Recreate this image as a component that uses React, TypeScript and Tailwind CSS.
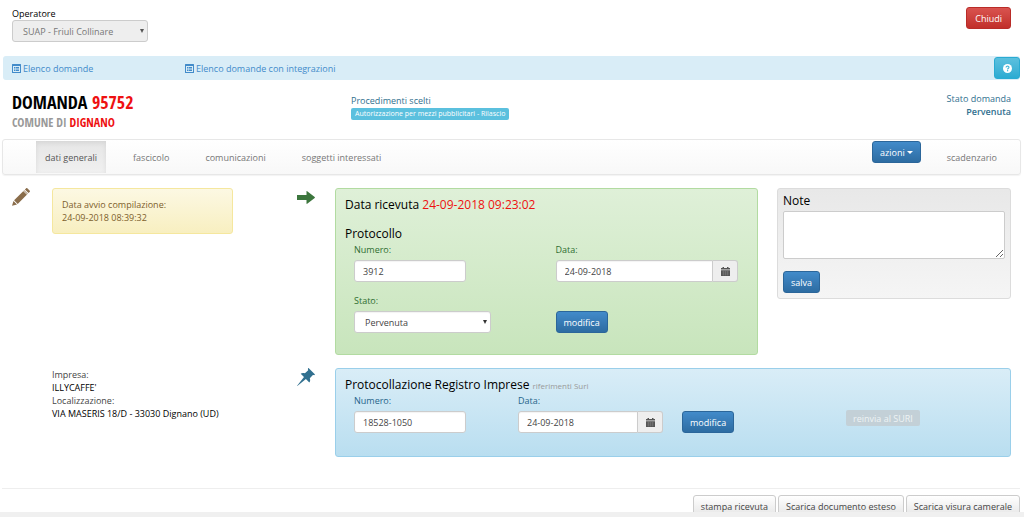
import React, { useState } from "react";

type IconProps = { className?: string };

const ListIcon = ({ className = "" }: IconProps) => (
  <svg viewBox="0 0 18 18" className={className} aria-hidden="true">
    <path
      fill="currentColor"
      fillRule="evenodd"
      d="M1 0h16a1 1 0 0 1 1 1v16a1 1 0 0 1-1 1H1a1 1 0 0 1-1-1V1a1 1 0 0 1 1-1zm1 4v12h14V4zM4 6h2v2H4zm3 0h7v2H7zM4 9h2v2H4zm3 0h7v2H7zM4 12h2v2H4zm3 0h7v2H7z"
    />
  </svg>
);

const HelpIcon = ({ className = "" }: IconProps) => (
  <svg viewBox="0 0 20 20" className={className} aria-hidden="true">
    <circle cx="10" cy="10" r="10" fill="currentColor" />
    <path d="M6.8 7.8C6.8 3.6 13.4 3.8 13.2 7.6C13.1 9.6 10.2 9.6 10.2 12.2" fill="none" stroke="#39b3d7" strokeWidth="2.4" />
    <rect x="8.9" y="13.6" width="2.6" height="2.6" fill="#39b3d7" />
  </svg>
);

const PencilIcon = ({ className = "" }: IconProps) => (
  <svg viewBox="0 0 18 18" className={className} aria-hidden="true">
    <path
      fill="currentColor"
      d="M14 .4c.5-.5 1-.5 1.500 0l2.100 2.100c.5.500.5 1 0 1.500l-1.100 1.100-3.600-3.600zM12.200 2.200l3.600 3.600-10.100 10.100-3.600-3.600zM1.500 13l3.500 3.500-5 1.300z"
    />
    <path d="M11.200 2.600l4.200 4.200" stroke="white" strokeWidth="0.900" />
  </svg>
);

const ArrowIcon = ({ className = "" }: IconProps) => (
  <svg viewBox="0 0 18 13" className={className} aria-hidden="true">
    <path fill="currentColor" d="M0 4h9.500V.4c0-.4.4-.5.700-.2L17.700 6c.3.300.3.700 0 1l-7.500 5.800c-.3.300-.7.100-.7-.3V9H0z" />
  </svg>
);

const PinIcon = ({ className = "" }: IconProps) => (
  <svg viewBox="0 0 18 18" className={className} aria-hidden="true">
    <path
      fill="currentColor"
      d="M11.800.2l6 6c.4.600-.4 1.200-1.300.9l-.6-.2-3.100 3.300c.6 1.700.5 3.200-.5 4.200L8.900 11 .3 17.900l-.2-.2L7 9.100 3.700 5.800c1.100-1 2.600-1.100 4.200-.5l3.300-3.100-.2-.7c-.3-.9.2-1.700.8-1.300z"
    />
  </svg>
);

const CalendarIcon = ({ className = "" }: IconProps) => (
  <svg viewBox="0 0 18 18" className={className} aria-hidden="true">
    <path fill="currentColor" d="M3 0h3v2h6V0h3v2h3v3H0V2h3z" />
    <path fill="currentColor" d="M0 6.500h18V18H0z" />
    <path stroke="#999" strokeWidth="0.600" fill="none" d="M2 10h14M2 14h14M5 8v9M9 8v9M13 8v9" />
  </svg>
);

const primary =
  "h-[22px] rounded-[3px] border border-[#2b669a] bg-linear-to-b from-[#428bca] to-[#2d6ca2] px-[7px] font-medium text-white";
const field =
  "h-[22px] rounded-[3px] border border-[#ccc] bg-white px-2 font-medium text-[#444] shadow-[inset_0_1px_1px_rgba(0,0,0,0.05)]";
const heading = "text-[12px] leading-[14px] font-medium text-black";
const label = "mb-1 block w-fit font-medium";

function Caret({ className = "" }: IconProps) {
  return (
    <svg viewBox="0 0 4 4" className={`pointer-events-none absolute right-1 top-[9px] size-1 ${className}`} aria-hidden="true">
      <path d="M0 0h4L2 4z" fill="currentColor" />
    </svg>
  );
}

function DateField({ id, value }: { id: string; value: string }) {
  return (
    <div className="flex pr-[19px]">
      <input id={id} defaultValue={value} className={`${field} min-w-0 flex-1 rounded-r-none`} />
      <button
        type="button"
        aria-label="Calendario"
        className="flex h-[22px] w-[25px] items-center justify-center rounded-r-[3px] border border-l-0 border-[#ccc] bg-[#eee] text-[#555]"
      >
        <CalendarIcon className="size-[9px]" />
      </button>
    </div>
  );
}

const tabs = ["dati generali", "fascicolo", "comunicazioni", "soggetti interessati"];
const downloads = ["stampa ricevuta", "Scarica documento esteso", "Scarica visura camerale"];

export default function App() {
  const [tab, setTab] = useState(tabs[0]);
  return (
    <div className="flex h-screen flex-col bg-white font-['Open_Sans',sans-serif] text-[9px] leading-[13px] text-[#444]">
      <div className="min-h-0 flex-1 overflow-hidden">
        <header className="flex h-14 items-start justify-between pl-3 pr-[13px] pt-[7px]">
          <div>
            <label htmlFor="operatore" className="block font-medium text-black">
              Operatore
            </label>
            <div className="relative w-[136px]">
              <select
                id="operatore"
                disabled
                className="h-[22px] w-full appearance-none rounded-[3px] border border-[#ccc] bg-[#eee] px-2.5 font-medium text-[#777] opacity-100"
              >
                <option>SUAP - Friuli Collinare</option>
              </select>
              <Caret className="text-[#555]" />
            </div>
          </div>
          <button
            type="button"
            className="h-[22px] rounded-[3px] border border-[#b92c28] bg-linear-to-b from-[#d9534f] to-[#c12e2a] px-2 font-medium text-white"
          >
            Chiudi
          </button>
        </header>

        <nav className="ml-[3px] mr-1 flex h-6 items-center rounded-[3px] bg-[#d9edf7] pl-[9px] text-[#428bca]">
          <a href="#domande" className="flex w-[173px] items-center gap-0.5">
            <ListIcon className="size-[9px]" />
            Elenco domande
          </a>
          <a href="#integrazioni" className="flex items-center gap-0.5">
            <ListIcon className="size-[9px]" />
            Elenco domande con integrazioni
          </a>
          <button
            type="button"
            aria-label="Aiuto"
            className="ml-auto flex h-[22px] w-[26px] items-center justify-center rounded-[3px] border border-[#2aabd2] bg-linear-to-b from-[#5bc0de] to-[#2aabd2] text-white"
          >
            <HelpIcon className="size-[9px]" />
          </button>
        </nav>

        <section className="grid h-[59px] grid-cols-3 pl-3 pr-[13px] text-[#31708f]">
          <div className="pt-3">
            <h1 className="font-['Open_Sans_Condensed','Open_Sans_Condensed_Bold','Liberation_Sans_Narrow','Open_Sans'] text-[18px] leading-5 font-bold text-black">
              DOMANDA <span className="text-[#ee1111]">95752</span>
            </h1>
            <h2 className="mt-1 font-['Open_Sans_Condensed','Open_Sans_Condensed_Bold','Liberation_Sans_Narrow','Open_Sans'] text-[12px] leading-[14px] font-bold text-[#999]">
              COMUNE DI <span className="text-[#ee1111]">DIGNANO</span>
            </h2>
          </div>
          <div className="pl-1.5 pt-3.5">
            <p>Procedimenti scelti</p>
            <span className="mt-px block w-fit rounded-[2px] bg-[#5bc0de] px-1 text-[7px] leading-3 font-medium text-white">
              Autorizzazione per mezzi pubblicitari - Rilascio
            </span>
          </div>
          <div className="pt-3 text-right">
            <p>Stato domanda</p>
            <p className="font-semibold">Pervenuta</p>
          </div>
        </section>

        <nav className="ml-0.5 mr-[3px] flex h-9 items-start rounded-[3px] border border-[#e7e7e7] bg-linear-to-b from-white to-[#f8f8f8] pl-[33px] pr-[14px] pt-px text-[#777] shadow-[0_1px_1px_rgba(0,0,0,0.05)]">
          <div className="flex gap-[18px]">
            {tabs.map((t) => (
              <button
                key={t}
                type="button"
                onClick={() => setTab(t)}
                className={
                  t === tab
                    ? "h-8 bg-linear-to-b from-[#e6e6e6] to-[#f0f0f0] px-[9px] text-[#555] shadow-[inset_0_2px_5px_rgba(0,0,0,0.08)]"
                    : "h-8 px-[9px]"
                }
              >
                {t}
              </button>
            ))}
          </div>
          <button type="button" className={`${primary} ml-auto flex items-center gap-0.5`}>
            azioni
            <svg viewBox="0 0 6 3" className="h-[3px] w-1.5" aria-hidden="true">
              <path d="M0 0h6L3 3z" fill="currentColor" />
            </svg>
          </button>
          <a href="#scadenzario" className="ml-[17px] flex h-8 items-center px-[9px]">
            scadenzario
          </a>
        </nav>

        <main className="grid grid-cols-[40px_minmax(0,245fr)_38px_minmax(0,423fr)_minmax(0,253fr)] gap-y-[13px] pl-3 pr-[13px] pt-[13px]">
          <PencilIcon className="size-[18px] text-[#8a6d4b]" />
          <div>
            <div className="mr-16 h-[46px] rounded-[3px] border border-[#f5e79e] bg-linear-to-b from-[#fcf8e3] to-[#f8efc0] px-[9px] py-[9px] font-medium text-[#7d602c]">
              <p>Data avvio compilazione:</p>
              <p>24-09-2018 08:39:32</p>
            </div>
          </div>
          <ArrowIcon className="mt-[3px] h-[13px] w-[18px] text-[#3c763d]" />

          <section className="h-[167px] rounded-[3px] border border-[#b2dba1] bg-linear-to-b from-[#dff0d8] to-[#c8e5bc] pl-[9px] pt-[9px] text-[#2f6e31]">
            <h3 className={heading}>
              Data ricevuta <span className="text-[#ee1111]">24-09-2018 09:23:02</span>
            </h3>
            <h3 className={`${heading} mt-[15px]`}>Protocollo</h3>
            <div className="grid grid-cols-2 gap-y-3 pl-[9px] pt-0.5">
              <div>
                <label htmlFor="numero" className={label}>Numero:</label>
                <input id="numero" defaultValue="3912" className={`${field} w-28`} />
              </div>
              <div>
                <label htmlFor="data" className={label}>Data:</label>
                <DateField id="data" value="24-09-2018" />
              </div>
              <div>
                <label htmlFor="stato" className={label}>Stato:</label>
                <div className="relative w-[137px]">
                  <select id="stato" className={`${field} w-full appearance-none pl-2.5`}>
                    <option>Pervenuta</option>
                  </select>
                  <Caret className="text-[#333]" />
                </div>
              </div>
              <div className="flex items-end">
                <button type="button" className={primary}>modifica</button>
              </div>
            </div>
          </section>

          <div className="pl-[19px]">
            <section className="rounded-[3px] border border-[#dcdcdc] bg-linear-to-b from-[#e8e8e8] to-[#f5f5f5] px-[5px] py-[5px]">
              <label htmlFor="note" className={`${heading} block w-fit`}>Note</label>
              <textarea id="note" className="mt-[3px] block h-12 w-full resize rounded-[2px] border border-[#ccc] bg-white p-1" />
              <button type="button" className={`${primary} mt-3 block`}>salva</button>
            </section>
          </div>

          <div className="col-start-2">
            <p>Impresa:</p>
            <p className="font-medium text-black">ILLYCAFFE'</p>
            <p>Localizzazione:</p>
            <p className="font-medium text-black">VIA MASERIS 18/D - 33030 Dignano (UD)</p>
          </div>
          <PinIcon className="size-[18px] text-[#31708f]" />
          <section className="col-span-2 h-[89px] rounded-[3px] border border-[#9acfea] bg-linear-to-b from-[#d9edf7] to-[#b9def0] pl-[9px] pt-[9px] text-[#25648a]">
            <h3 className={`${heading} flex items-baseline gap-[3px]`}>
              Protocollazione Registro Imprese
              <small className="text-[8px] leading-none font-normal text-[#999]">riferimenti Suri</small>
            </h3>
            <div className="grid grid-cols-4 pl-[9px] pt-0.5">
              <div>
                <label htmlFor="numero-suri" className={label}>Numero:</label>
                <input id="numero-suri" defaultValue="18528-1050" className={`${field} w-28`} />
              </div>
              <div>
                <label htmlFor="data-suri" className={label}>Data:</label>
                <DateField id="data-suri" value="24-09-2018" />
              </div>
              <div className="flex items-end">
                <button type="button" className={primary}>modifica</button>
              </div>
              <div className="pt-4">
                <button type="button" disabled className="block h-4 rounded-[2px] bg-[#c3d0d7] px-[7px] text-[#eef3f5]">
                  reinvia al SURI
                </button>
              </div>
            </div>
          </section>
        </main>

        <footer className="ml-0.5 mr-1 mt-[31px] flex justify-end gap-0.5 border-t border-[#eee] pt-1.5">
          {downloads.map((d) => (
            <button
              key={d}
              type="button"
              className="h-[22px] rounded-[3px] border border-[#ccc] bg-linear-to-b from-white to-[#e6e6e6] px-[7px] text-[#444]"
            >
              {d}
            </button>
          ))}
        </footer>
      </div>
      <div className="h-[5px] shrink-0 bg-[#f0f0f0]" />
    </div>
  );
}
